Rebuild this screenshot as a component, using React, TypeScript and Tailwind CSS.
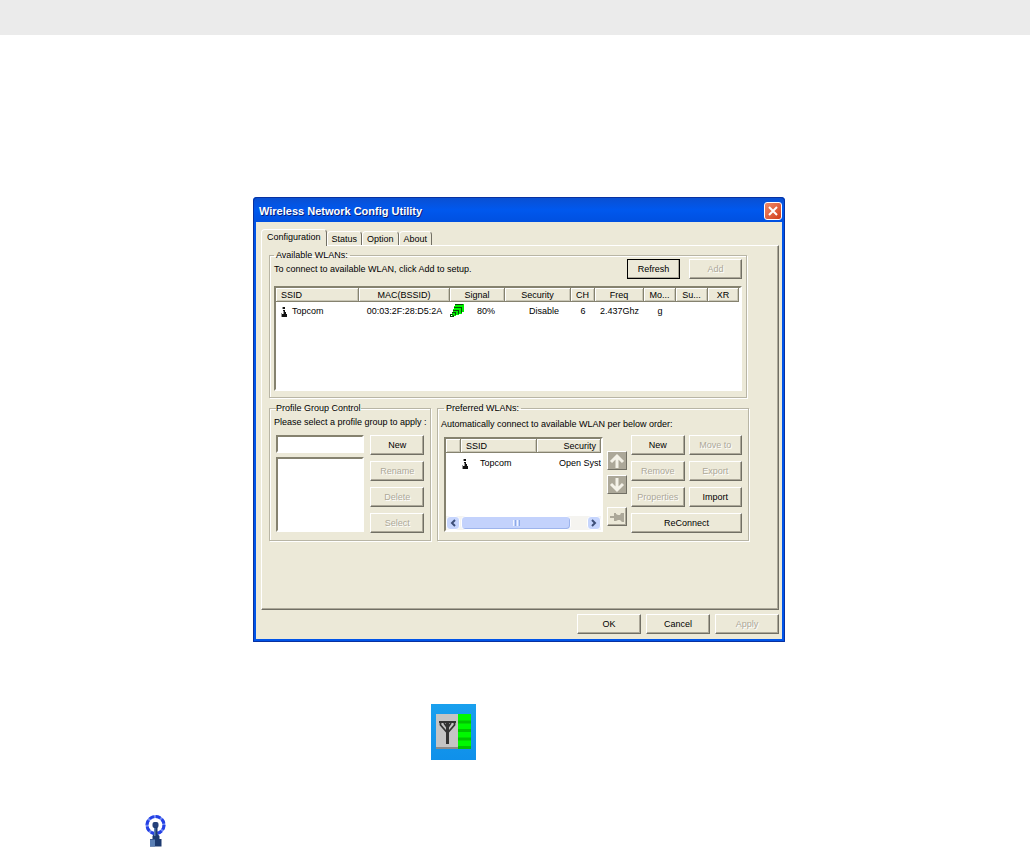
import React, { useState } from "react";

const raised =
  "border border-t-white border-l-white border-r-[#716f64] border-b-[#716f64] shadow-[inset_-1px_-1px_0_#aca899]";
const sunken =
  "border-2 border-t-[#85826f] border-l-[#85826f] border-r-white border-b-white bg-white";
const group =
  "min-w-0 border border-[#b8b5a5] shadow-[1px_1px_0_#fff,inset_1px_1px_0_#fff]";

function Button({
  children,
  disabled,
  focused,
  className = "",
}: {
  children: React.ReactNode;
  disabled?: boolean;
  focused?: boolean;
  className?: string;
}) {
  return (
    <button
      type="button"
      disabled={disabled}
      className={`flex h-5 items-center justify-center bg-[#ece9d8] ${raised} ${
        focused ? "outline outline-1 -outline-offset-1 outline-black" : ""
      } ${disabled ? "text-[#aca899] [text-shadow:1px_1px_0_#fff]" : "text-black"} ${className}`}
    >
      {children}
    </button>
  );
}

function AccessPoint() {
  return (
    <svg width="8" height="12" viewBox="0 0 8 12" shapeRendering="crispEdges" aria-hidden="true">
      <path d="M3 2h2v2h-2zM3 5h2v2h1v2h1v3h-5v-3h1z" fill="#111" />
      <path d="M2 2h1v2h-1zM1 8h1v4h-1zM3 6h1v3h-1z" fill="#999" />
    </svg>
  );
}

function Signal() {
  return (
    <svg width="15" height="14" viewBox="0 0 15 14" shapeRendering="crispEdges" aria-hidden="true">
      <path d="M5 0h9v8h-2v2h-3v1h-3v1h-4v-4h1v-3h1v-3h1z" fill="#00f000" />
      <path
        d="M5 0h8v1h-8zM4 3h8v6h-1v-5h-7zM3 6h6v4h-1v-3h-5zM2 8h4v3h-1v-2h-3zM0 10h3v1h-2v2h-1zM1 12h2v-1h1v2h-3z"
        fill="#064a06"
      />
    </svg>
  );
}

const th =
  "h-[14px] overflow-hidden whitespace-nowrap border-r border-b border-r-[#85826f] border-b-[#85826f] bg-[#ece9d8] p-0 font-normal shadow-[inset_1px_1px_0_#fff,inset_-1px_-1px_0_#c9c6b5]";

const columns: [string, string, string][] = [
  ["SSID", "w-[83px]", "pl-[5px] text-left"],
  ["MAC(BSSID)", "w-[91px]", "text-center"],
  ["Signal", "w-[55px]", "text-center"],
  ["Security", "w-[66px]", "text-center"],
  ["CH", "w-[24px]", "text-center"],
  ["Freq", "w-[49px]", "text-center"],
  ["Mo...", "w-[32px]", "text-center"],
  ["Su...", "w-[32px]", "text-center"],
  ["XR", "w-[31px]", "text-center"],
];

function AvailableTable() {
  return (
    <div className={`mt-[7px] h-[105px] ${sunken}`}>
      <table className="w-[463px] table-fixed border-separate border-spacing-0">
        <thead>
          <tr>
            {columns.map(([name, width, align]) => (
              <th key={name} className={`${th} ${width} ${align}`}>
                {name}
              </th>
            ))}
          </tr>
        </thead>
        <tbody>
          <tr className="h-[18px]">
            <td className="p-0">
              <span className="flex items-center gap-1 pl-1">
                <AccessPoint />
                Topcom
              </span>
            </td>
            <td className="p-0 text-center">00:03:2F:28:D5:2A</td>
            <td className="p-0">
              <span className="flex items-center gap-3">
                <Signal />
                80%
              </span>
            </td>
            <td className="p-0 pl-3 text-center">Disable</td>
            <td className="p-0 text-center">6</td>
            <td className="p-0 text-center">2.437Ghz</td>
            <td className="p-0 text-center">g</td>
            <td className="p-0" />
            <td className="p-0" />
          </tr>
        </tbody>
      </table>
    </div>
  );
}

function Scrollbar() {
  const arrow =
    "flex w-[14px] items-center justify-center rounded-sm border border-white bg-[#c6d5fd] text-[#3d4f78]";
  return (
    <div className="flex h-[14px] bg-[#f5f4f0]">
      <button type="button" aria-label="Scroll left" className={arrow}>
        <svg width="6" height="8" viewBox="0 0 6 8" fill="none" stroke="currentColor" strokeWidth="2">
          <path d="M5 1L2 4l3 3" />
        </svg>
      </button>
      <div className="ml-px flex w-[110px] items-center justify-center gap-px rounded-sm border border-white bg-[#c3d2fc] shadow-[inset_-1px_-1px_0_#9db4ec]">
        <i className="h-[6px] w-px bg-[#f0f5ff]" />
        <i className="h-[6px] w-px bg-[#8caae6]" />
        <i className="h-[6px] w-px bg-[#f0f5ff]" />
        <i className="h-[6px] w-px bg-[#8caae6]" />
      </div>
      <button type="button" aria-label="Scroll right" className={`ml-auto ${arrow}`}>
        <svg width="6" height="8" viewBox="0 0 6 8" fill="none" stroke="currentColor" strokeWidth="2">
          <path d="M1 1l3 3-3 3" />
        </svg>
      </button>
    </div>
  );
}

function PreferredTable() {
  return (
    <div className={`flex h-[95px] w-[159px] flex-col overflow-hidden ${sunken}`}>
      <table className="w-full table-fixed border-separate border-spacing-0">
        <thead>
          <tr>
            <th className={`${th} w-[15px]`} aria-label="Active" />
            <th className={`${th} w-[76px] pl-[5px] text-left`}>SSID</th>
            <th className={`${th} pr-1 text-right`}>Security</th>
          </tr>
        </thead>
        <tbody>
          <tr className="h-[20px]">
            <td className="p-0" />
            <td className="p-0">
              <span className="flex items-center gap-[11px]">
                <AccessPoint />
                Topcom
              </span>
            </td>
            <td className="whitespace-nowrap p-0 pl-[22px]">Open Syst</td>
          </tr>
        </tbody>
      </table>
      <div className="mt-auto">
        <Scrollbar />
      </div>
    </div>
  );
}

function ToolButton({ label, dark, children }: { label: string; dark?: boolean; children: React.ReactNode }) {
  return (
    <button
      type="button"
      disabled
      aria-label={label}
      className={`flex h-[19px] w-5 items-center justify-center ${dark ? "bg-[#aca899]" : "bg-[#ece9d8]"} ${raised}`}
    >
      {children}
    </button>
  );
}

const tabs = ["Configuration", "Status", "Option", "About"];

function Tabs() {
  const [active, setActive] = useState("Configuration");
  return (
    <div role="tablist" className="flex h-4 items-end">
      {tabs.map((name) => (
        <button
          key={name}
          type="button"
          role="tab"
          aria-selected={name === active}
          onClick={() => setActive(name)}
          className={`rounded-t-sm border border-b-0 border-t-white border-l-white border-r-[#716f64] bg-[#ece9d8] ${
            name === active ? "relative z-10 -mb-px h-[17px] px-[5px] pb-[3px]" : "h-[14px] px-1"
          }`}
        >
          {name}
        </button>
      ))}
    </div>
  );
}

function Dialog() {
  return (
    <section
      aria-label="Wireless Network Config Utility"
      className="w-[532px] max-w-full rounded-t-sm border-x-[3px] border-b-[3px] border-[#0054e8] bg-[#ece9d8] font-['Liberation_Sans',sans-serif] text-[9px] leading-3 text-black outline outline-1 -outline-offset-1 outline-[#0831a0]"
    >
      <header className="-mx-[3px] flex h-[25px] items-center justify-between rounded-t-sm bg-linear-to-b from-[#0a4fd0] via-[#0058ee] to-[#0050e0] px-[6px] pr-[3px] pt-0.5">
        <h1 className="text-[11px] font-bold text-white [text-shadow:1px_1px_0_#0a1f7a]">
          Wireless Network Config Utility
        </h1>
        <button
          type="button"
          aria-label="Close"
          className="flex size-[18px] items-center justify-center rounded-[3px] border border-white bg-linear-to-br from-[#f08a68] to-[#d03a14]"
        >
          <svg width="10" height="10" viewBox="0 0 10 10" stroke="#fff" strokeWidth="2">
            <path d="M1 1l8 8M9 1l-8 8" />
          </svg>
        </button>
      </header>

      <div className="pt-[7px] pr-[3px] pb-[5px] pl-[5px]">
        <Tabs />
        <div className="h-[365px] border border-t-white border-l-white border-r-[#716f64] border-b-[#716f64] px-[7px] pt-[3px] shadow-[inset_-1px_-1px_0_#aca899]">
          <fieldset className={`mr-6 px-1 pb-[6px] ${group}`}>
            <legend className="px-0.5">Available WLANs:</legend>
            <div className="flex items-start justify-between">
              <p className="pt-0.5">To connect to available WLAN, click Add to setup.</p>
              <div className="-mt-0.5 flex gap-[9px]">
                <Button focused className="w-[53px]">Refresh</Button>
                <Button disabled className="w-[53px]">Add</Button>
              </div>
            </div>
            <AvailableTable />
          </fieldset>

          <div className="mt-1 flex gap-[6px]">
            <fieldset className={`w-[162px] px-[6px] ${group}`}>
              <legend>
                <label htmlFor="group-name">Profile Group Control</label>
              </legend>
              <p className="-ml-0.5 whitespace-nowrap pt-0.5">Please select a profile group to apply :</p>
              <div className="mt-[7px] flex gap-[6px]">
                <div className="flex w-[89px] flex-col gap-1">
                  <input id="group-name" type="text" className={`h-[18px] w-full ${sunken}`} />
                  <select size={4} aria-label="Profile groups" className={`h-[75px] w-full ${sunken}`} />
                </div>
                <div className="flex w-[54px] flex-col gap-[6px]">
                  <Button>New</Button>
                  <Button disabled>Rename</Button>
                  <Button disabled>Delete</Button>
                  <Button disabled>Select</Button>
                </div>
              </div>
            </fieldset>

            <fieldset className={`w-[312px] pr-[6px] pb-[7px] pl-[6px] ${group}`}>
              <legend className="px-0.5">Preferred WLANs:</legend>
              <p className="-ml-[3px] whitespace-nowrap pt-1">
                Automatically connect to available WLAN per below order:
              </p>
              <div className="mt-[5px] flex">
                <div className="pt-0.5">
                  <PreferredTable />
                </div>
                <div className="flex flex-col gap-[5px] px-1 pt-4">
                  <ToolButton label="Move up" dark>
                    <svg width="16" height="16" viewBox="0 0 16 16" fill="none" stroke="#f4f2e8" strokeWidth="3">
                      <path d="M8 15V3M2 9l6-6 6 6" />
                    </svg>
                  </ToolButton>
                  <ToolButton label="Move down" dark>
                    <svg width="16" height="16" viewBox="0 0 16 16" fill="none" stroke="#f4f2e8" strokeWidth="3">
                      <path d="M8 1v12M2 7l6 6 6-6" />
                    </svg>
                  </ToolButton>
                  <div className="mt-2">
                    <ToolButton label="Pin">
                      <svg width="16" height="12" viewBox="0 0 16 12" fill="#aca899">
                        <path d="M1 5h4V2h2v1l2 1h2l1-2h3v9h-2l-2-2H9l-2 1H5V7H1z" />
                      </svg>
                    </ToolButton>
                  </div>
                </div>
                <div className="grid flex-1 grid-cols-2 content-start gap-x-1 gap-y-[6px]">
                  <Button>New</Button>
                  <Button disabled>Move to</Button>
                  <Button disabled>Remove</Button>
                  <Button disabled>Export</Button>
                  <Button disabled>Properties</Button>
                  <Button>Import</Button>
                  <Button className="col-span-2">ReConnect</Button>
                </div>
              </div>
            </fieldset>
          </div>
        </div>

        <footer className="mt-1 flex justify-end gap-[5px]">
          <Button className="w-16">OK</Button>
          <Button className="w-16">Cancel</Button>
          <Button disabled className="w-16">Apply</Button>
        </footer>
      </div>
    </section>
  );
}

export default function App() {
  return (
    <div className="min-h-screen bg-white">
      <div className="h-[35px] bg-[#ebebeb]" />
      <main className="pt-[162px]">
        <div className="flex justify-center pl-2">
          <Dialog />
        </div>
        <div className="mt-[62px] flex justify-center pr-[123px]">
          <svg width="45" height="56" viewBox="0 0 45 56" aria-label="Signal strength">
            <defs>
              <linearGradient id="sky" x1="0" y1="0" x2="0" y2="1">
                <stop offset="0" stopColor="#1aa0ee" />
                <stop offset="1" stopColor="#0f90ea" />
              </linearGradient>
            </defs>
            <rect width="45" height="56" fill="url(#sky)" />
            <rect x="5" y="10" width="22" height="35" fill="#c4c4c4" />
            <path d="M5 44h22" stroke="#8a8a8a" strokeWidth="2" />
            <path d="M8 18h17M9.500 18v3l7 8 7-8v-3M13 19l3.500 5 3.500-5" fill="none" stroke="#333" strokeWidth="1.8" />
            <path d="M16.500 18v22" stroke="#333" strokeWidth="3" />
            <rect x="27" y="10" width="13" height="35" fill="#00f800" />
            <path d="M27 18h13M27 26.500h13M27 35h13M27 43.500h13" stroke="#00c400" strokeWidth="3" />
          </svg>
        </div>
        <div className="mt-[54px] pl-[145px]">
          <svg width="22" height="34" viewBox="0 0 22 34" aria-label="Access point">
            <circle cx="10.500" cy="11" r="8.500" fill="#fff" stroke="#6f88f4" strokeWidth="3" />
            <circle cx="10.500" cy="11" r="8.500" fill="none" stroke="#2440e4" strokeWidth="3" strokeDasharray="4.700 2" />
            <rect x="7.500" y="8" width="6" height="6" rx="2" fill="#24407a" />
            <path d="M9 13h3.500v7l2 2v3h2v7.500h-11.500v-7.500h2.500v-3l1.500-2z" fill="#1c3a70" />
            <path d="M5 25.500h5v7h-5zM9 14h1.500v8h-1.500z" fill="#5a7fb5" />
          </svg>
        </div>
      </main>
    </div>
  );
}
